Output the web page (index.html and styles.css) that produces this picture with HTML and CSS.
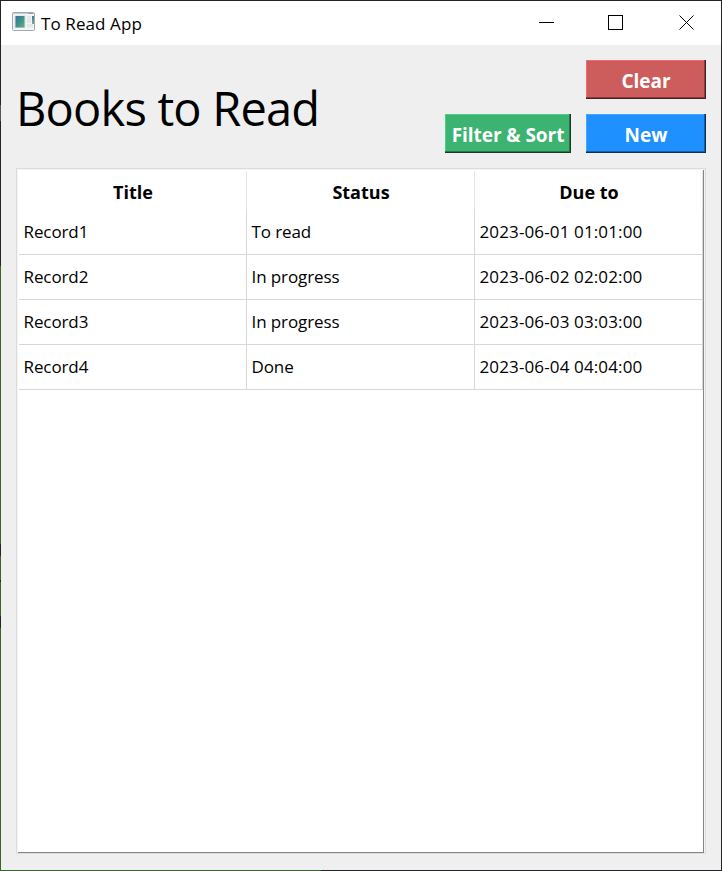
FILE: index.html
```html
<!DOCTYPE html>
<html lang="en">
<head>
<meta charset="utf-8">
<title>To Read App</title>
<link rel="stylesheet" href="styles.css">
</head>
<body>
<div class="window">
  <div class="edge edge-left"></div>
  <div class="edge edge-bottom"></div>
  <header class="titlebar">
    <svg class="app-icon" width="24" height="20" viewBox="0 0 24 20">
      <defs>
        <linearGradient id="pane" x1="0" y1="0" x2="1" y2="1"><stop offset="0" stop-color="#3b719f"/><stop offset=".5" stop-color="#3b928c"/><stop offset="1" stop-color="#68b17a"/></linearGradient>
        <linearGradient id="side" x1="0" y1="0" x2="0" y2="1"><stop offset="0" stop-color="#3f73a8"/><stop offset="1" stop-color="#69b38a"/></linearGradient>
      </defs>
      <rect x=".5" y="1.500" width="22" height="18" rx="1" fill="#f4f5f6" stroke="#a4a9ad"/>
      <path d="M1 2.500h21" stroke="#c3cad1"/>
      <path d="M16 2.500h5" stroke="#8f9dad"/>
      <rect x="2.500" y="4.500" width="11" height="12.500" fill="#d9dee0"/>
      <rect x="3.500" y="5" width="9" height="11.500" fill="url(#pane)"/>
      <rect x="15" y="5" width="4" height="7" fill="#e5e6e8"/>
      <rect x="15" y="13" width="6" height="3.500" fill="#e5e6e8"/>
      <rect x="20" y="5" width="2" height="8" fill="url(#side)"/>
    </svg>
    <span class="app-name">To Read App</span>
    <svg class="controls" width="156" height="16" viewBox="0 0 156 16" fill="none" stroke="#000">
      <path d="M0 7.5h15"/>
      <rect x="69.500" y=".5" width="14" height="14"/>
      <path d="M140.500 .5l14 14M154.500 .5l-14 14"/>
    </svg>
  </header>
  <section class="toolbar">
    <h1>Books to Read</h1>
    <div class="actions">
      <button class="btn clear">Clear</button>
      <button class="btn filter">Filter &amp; Sort</button>
      <button class="btn new">New</button>
    </div>
  </section>
  <main class="frame">
    <div class="list">
      <div class="row head"><div><span>Title</span></div><div><span>Status</span></div><div><span>Due to</span></div></div>
      <div class="row first"><div><span>Record1</span></div><div><span>To read</span></div><div class="date"><span>2023-06-01 01:01:00</span></div></div>
      <div class="row"><div><span>Record2</span></div><div><span>In progress</span></div><div class="date"><span>2023-06-02 02:02:00</span></div></div>
      <div class="row"><div><span>Record3</span></div><div><span>In progress</span></div><div class="date"><span>2023-06-03 03:03:00</span></div></div>
      <div class="row"><div><span>Record4</span></div><div><span>Done</span></div><div class="date"><span>2023-06-04 04:04:00</span></div></div>
    </div>
  </main>
</div>
</body>
</html>
```
FILE: styles.css
```css
* { box-sizing: border-box; }
body {
  margin: 0;
  font-family: "Open Sans", "Noto Sans", sans-serif;
  color: #000;
}
.window {
  position: relative;
  display: flex;
  flex-direction: column;
  width: 722px;
  height: 871px;
  background: #efefef;
  border: 1px solid #242326;
}
.edge { position: absolute; }
.edge-left {
  left: -1px;
  top: -1px;
  width: 1px;
  height: 871px;
  background: linear-gradient(#242326 0 105px, #555558 105px 121px, #242326 121px 266px, #3b6428 266px 544px, #242326 544px 556px, #3b6428 556px 580px, #242326 580px 582px, #3b6428 582px 616px, #242326 616px 628px, #3b6428 628px);
}
.edge-bottom {
  left: -1px;
  bottom: -1px;
  width: 321px;
  height: 1px;
  background: #3b6428;
}
.titlebar {
  display: flex;
  flex: none;
  height: 44px;
  padding: 0 26px 0 11px;
  background: #fff;
}
.app-icon { margin-top: 10px; }
.app-name {
  margin: 0 auto 0 5px;
  line-height: 45px;
  font-size: 17px;
  letter-spacing: 0.1px;
}
.controls { margin-top: 14px; }
.toolbar {
  display: flex;
  flex: none;
  justify-content: space-between;
  height: 123px;
  padding: 15px 15px 0;
}
h1 {
  margin: 0;
  font-size: 47px;
  font-weight: 400;
  line-height: 96px;
  letter-spacing: -0.8px;
  white-space: nowrap;
}
.actions {
  display: grid;
  grid-template-columns: 126px 120px;
  grid-template-rows: 39px 39px;
  gap: 15px;
}
.btn {
  padding: 3px 0 0;
  border: 0;
  color: #fff;
  font: 700 19px/36px "Open Sans", "Noto Sans", sans-serif;
  letter-spacing: -0.05px;
  white-space: nowrap;
}
.clear {
  grid-column: 2;
  background: #cd5c5c;
  box-shadow: inset -1px -1px #451f1f, inset -2px -2px #893d3d, inset 1px 1px #f06b6b;
}
.filter {
  background: #3cb371;
  box-shadow: inset -1px -1px #143c26, inset -2px -2px #28774b, inset 1px 1px #46d184;
}
.new {
  background: #1e90ff;
  box-shadow: inset -1px -1px #0a3055, inset -2px -2px #1460aa, inset 1px 1px #48a5ff;
}
.frame {
  flex: none;
  width: 690px;
  height: 686px;
  margin-left: 15px;
  border: 1px solid #dcdcdc;
  background: #f3f3f3;
  padding: 1px 1px 0;
}
.list {
  height: 683px;
  padding-left: 1px;
  background: #fff;
  border-right: 1px solid #83878c;
  border-bottom: 1px solid #83878c;
}
.row {
  display: grid;
  grid-template-columns: repeat(3, 228px);
  height: 45px;
  font-size: 17px;
  line-height: 43px;
  letter-spacing: -0.1px;
}
.row > div {
  border-right: 1px solid #d8d8d8;
  border-bottom: 1px solid #d8d8d8;
  padding-left: 4.500px;
}
.row > .date { letter-spacing: 0.13px; }
.head {
  height: 39px;
  padding-top: 1px;
  font-size: 18px;
  font-weight: 700;
  line-height: 43px;
  letter-spacing: 0;
  text-align: center;
}
.head > div {
  padding: 0 0 0 1px;
  border-right-color: #e5e5e5;
  border-bottom: 0;
}
.first { height: 46px; line-height: 45px; }
```
